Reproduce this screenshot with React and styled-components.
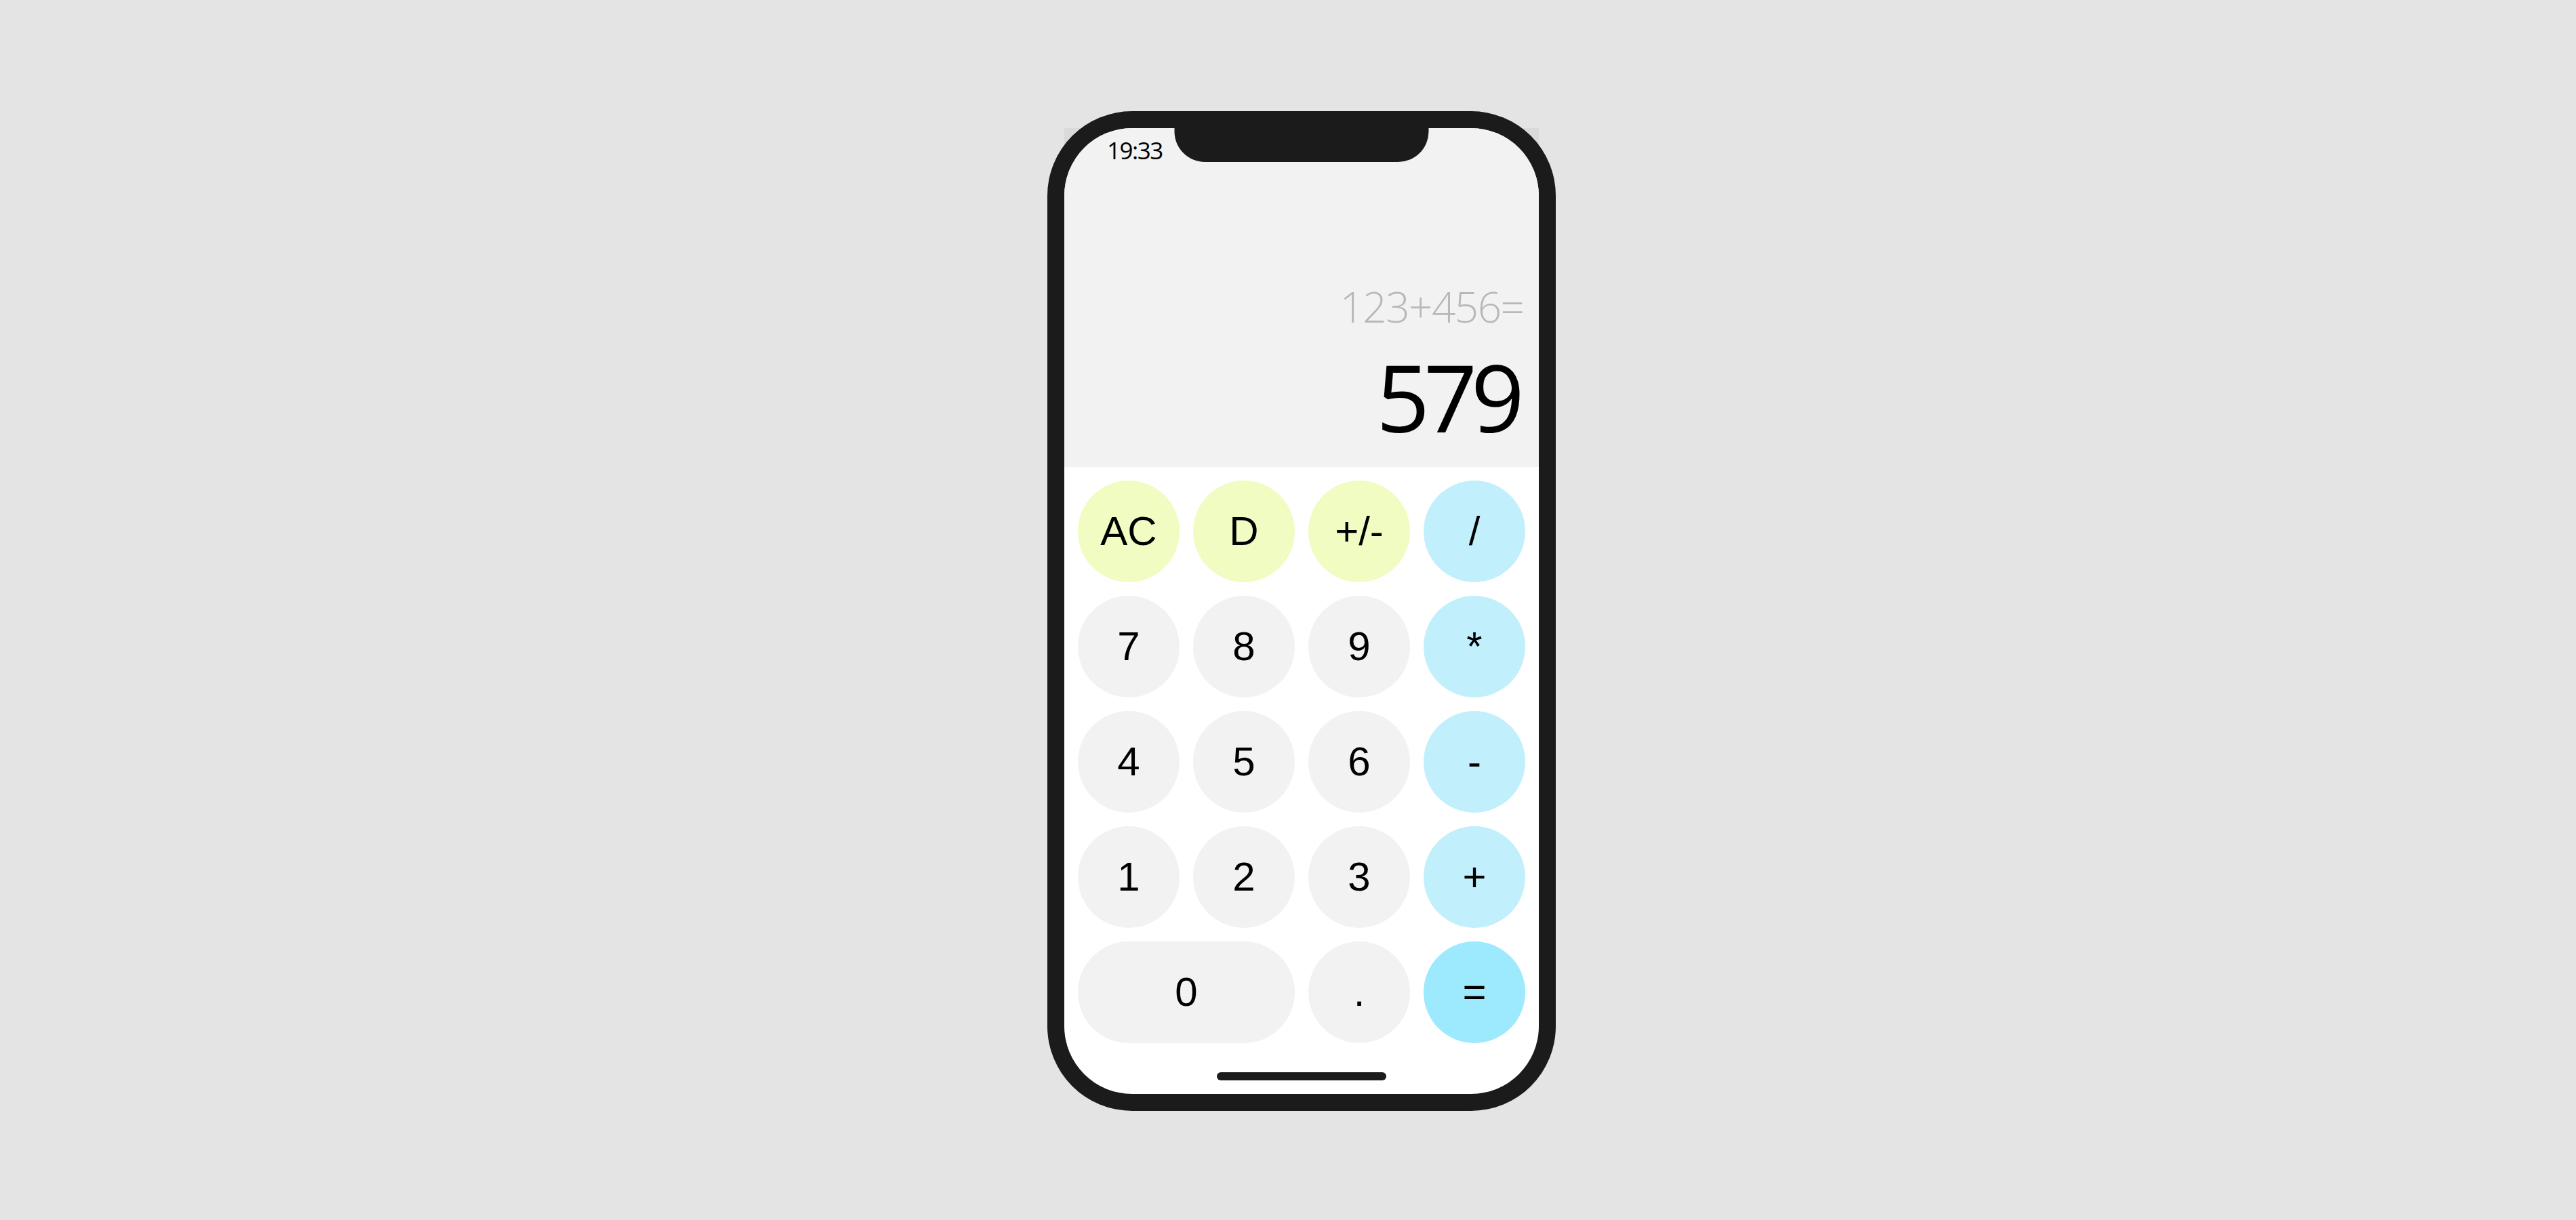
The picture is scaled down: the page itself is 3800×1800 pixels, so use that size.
import React from "react";
import styled, { createGlobalStyle } from "styled-components";

const GlobalStyle = createGlobalStyle`
  html, body {
    margin: 0;
    padding: 0;
    background: #e4e4e4;
  }
  * { box-sizing: border-box; }
`;

const Page = styled.main`
  width: 100%;
  height: 100vh;
  display: flex;
  align-items: center;
  justify-content: center;
  padding-left: 40px;
  padding-top: 2px;
`;

const Device = styled.div`
  position: relative;
  isolation: isolate;
  width: 750px;
  height: 1475px;
  &::before {
    content: "";
    position: absolute;
    top: 25px;
    left: 25px;
    right: 25px;
    height: 60px;
    background: #dadada;
    z-index: -1;
  }
`;

const Body = styled.div`
  width: 100%;
  height: 100%;
  padding: 25px;
  border-radius: 125px;
  background: #1b1b1b;
`;

const Screen = styled.div`
  position: relative;
  width: 700px;
  height: 1425px;
  border-radius: 100px;
  overflow: hidden;
  background: #ffffff;
  display: flex;
  flex-direction: column;
`;

const Notch = styled.div`
  position: absolute;
  top: 0;
  left: 50%;
  transform: translateX(-50%);
  width: 375px;
  height: 50px;
  background: #1b1b1b;
  border-radius: 0 0 45px 45px;
`;

const Display = styled.section`
  height: 500px;
  background: #f2f2f2;
  display: flex;
  flex-direction: column;
  padding: 0 21px 0 63px;
  font-family: "Open Sans", "Noto Sans", sans-serif;
`;

const StatusBar = styled.div`
  height: 70px;
  padding-top: 15px;
  font-size: 35px;
  font-weight: 500;
  letter-spacing: -1.5px;
  line-height: 1;
  color: #000;
`;

const Readout = styled.div`
  flex: 1;
  display: flex;
  flex-direction: column;
  align-items: flex-end;
  justify-content: flex-end;
  padding-bottom: 36px;
`;

const Expression = styled.div`
  font-size: 62px;
  font-weight: 300;
  letter-spacing: -1.5px;
  margin-right: 1.5px;
  line-height: 1;
  color: #b8b8b8;
  margin-bottom: 32px;
`;

const Result = styled.div`
  font-size: 138px;
  font-weight: 400;
  letter-spacing: -9px;
  margin-right: 9px;
  line-height: 1;
  color: #000;
`;

const Keypad = styled.div`
  display: grid;
  grid-template-columns: repeat(4, 150px);
  grid-auto-rows: 150px;
  gap: 20px;
  padding: 20px 20px 0;
`;

const palette = {
  fn: "#f0fcc1",
  op: "#c1f0fc",
  eq: "#9de9fd",
  num: "#f2f2f2",
};

const Key = styled.button`
  grid-column: ${(p) => (p.$wide ? "span 2" : "span 1")};
  border: none;
  border-radius: 75px;
  background: ${(p) => palette[p.$kind]};
  color: #000;
  font-family: "Liberation Sans", Arial, sans-serif;
  font-size: 60px;
  line-height: 1;
  display: flex;
  align-items: center;
  justify-content: center;
  padding: 0;
  cursor: pointer;
`;

const HomeBar = styled.div`
  width: 250px;
  height: 12px;
  border-radius: 6px;
  background: #1b1b1b;
  margin: 43px auto 0;
`;

const keys = [
  { label: "AC", kind: "fn" },
  { label: "D", kind: "fn" },
  { label: "+/-", kind: "fn" },
  { label: "/", kind: "op" },
  { label: "7", kind: "num" },
  { label: "8", kind: "num" },
  { label: "9", kind: "num" },
  { label: "*", kind: "op" },
  { label: "4", kind: "num" },
  { label: "5", kind: "num" },
  { label: "6", kind: "num" },
  { label: "-", kind: "op" },
  { label: "1", kind: "num" },
  { label: "2", kind: "num" },
  { label: "3", kind: "num" },
  { label: "+", kind: "op" },
  { label: "0", kind: "num", wide: true },
  { label: ".", kind: "num" },
  { label: "=", kind: "eq" },
];

export default function App() {
  return (
    <>
      <GlobalStyle />
      <Page>
        <Device>
          <Body>
            <Screen>
              <Notch />
              <Display>
                <StatusBar>19:33</StatusBar>
                <Readout>
                  <Expression>123+456=</Expression>
                  <Result>579</Result>
                </Readout>
              </Display>
              <Keypad>
                {keys.map((k) => (
                  <Key key={k.label} $kind={k.kind} $wide={k.wide}>
                    {k.label}
                  </Key>
                ))}
              </Keypad>
              <HomeBar />
            </Screen>
          </Body>
        </Device>
      </Page>
    </>
  );
}
